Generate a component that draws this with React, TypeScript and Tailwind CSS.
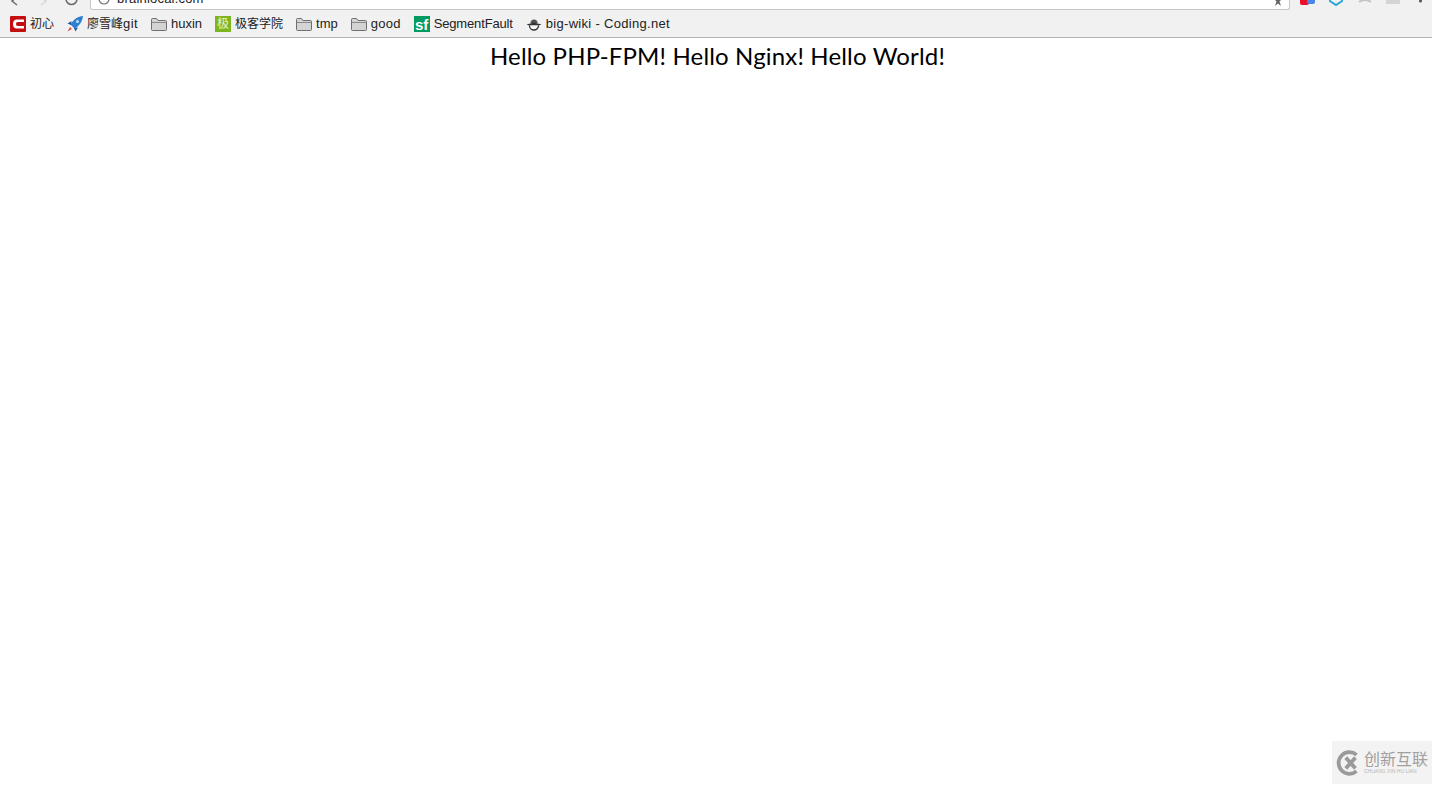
const font = { fontFamily: '"Liberation Sans","Noto Sans CJK SC",sans-serif' };

function Folder() {
  return (
    <svg width="16" height="13" viewBox="0 0 16 13" className="shrink-0">
      <path d="M0.500 11.500V1.500Q0.500 0.500 1.500 0.500H5.500L7 2.500H14.500Q15.500 2.500 15.500 3.500V11.500Q15.500 12.500 14.500 12.500H1.500Q0.500 12.500 0.500 11.500Z" fill="#d4d4d4" stroke="#6f6f6f" />
      <path d="M1 4.500H15" stroke="#8a8a8a" />
    </svg>
  );
}

function Bookmark({ icon, label, className }: { icon: React.ReactNode; label: React.ReactNode; className?: string }) {
  return (
    <div className={`flex items-center gap-1 ${className ?? ""}`}>
      {icon}
      <span className="text-[13px] leading-4 text-[#222] whitespace-nowrap">{label}</span>
    </div>
  );
}

export default function App() {
  return (
    <div className="relative h-[785px] w-[1432px] overflow-hidden bg-white" style={font}>
      <div className="h-[38px] border-b border-[#b4b4b4] bg-[#f1f1f1] flex flex-col">
        <div className="h-[10px] flex items-end relative overflow-hidden">
          <svg width="90" height="10" viewBox="0 0 90 10" className="shrink-0">
            <path d="M17 -3L12 1L17 5" fill="none" stroke="#6e6e6e" strokeWidth="1.600" />
            <path d="M41 -3L46 1L41 5" fill="none" stroke="#d8d8d8" strokeWidth="1.600" />
            <path d="M77 -1A5.500 5.500 0 1 1 66 -1" fill="none" stroke="#6e6e6e" strokeWidth="1.600" />
          </svg>
          <div className="w-[1200px] h-[10px] shrink-0 bg-white border-b border-r border-l border-[#c6c6c6] rounded-b-[3px] relative overflow-hidden">
            <svg width="14" height="10" viewBox="0 0 14 10" className="absolute left-[6px] top-0">
              <circle cx="7" cy="-1" r="5" fill="none" stroke="#777" strokeWidth="1.200" />
            </svg>
            <span className="absolute left-[26px] top-[-9px] text-[13px] leading-4 text-[#222] tracking-[0.2px]">brainlocal.com</span>
            <svg width="14" height="10" viewBox="0 0 14 10" className="absolute right-[4px] top-0">
              <path d="M2 -2L12 -2L8.500 1.500L10 6L7 3.500L4 6L5.500 1.500Z" fill="#666" />
            </svg>
          </div>
          <svg width="142" height="10" viewBox="0 0 142 10" className="shrink-0">
            <rect x="10" y="-4" width="9" height="9" rx="2" fill="#e8102a" />
            <rect x="17" y="-4" width="8" height="8" rx="2" fill="#4a86e8" />
            <path d="M40 -3V1L46 5L52 1V-3" fill="none" stroke="#2aa5d8" strokeWidth="2" />
            <path d="M69 2Q75 -2 81 2" fill="none" stroke="#c4c4c4" strokeWidth="2" />
            <rect x="96" y="-4" width="14" height="8" fill="#d4d4d4" />
            <circle cx="130.500" cy="1" r="1.500" fill="#555" />
          </svg>
        </div>
        <div className="flex-1 flex items-center pt-[1px] gap-[13px] pl-[10px]">
          <Bookmark
            label={<span className="text-[12px]">初心</span>}
            icon={
              <svg width="16" height="16" viewBox="0 0 16 16" className="shrink-0">
                <rect width="16" height="16" rx="1" fill="#c40f12" />
                <path d="M14 3.500H7Q3 3.500 3 8Q3 12.500 7 12.500H14V10H7.500Q6 10 6 8Q6 6 7.500 6H14Z" fill="#fff" />
              </svg>
            }
          />
          <Bookmark
            label={<><span className="text-[12px]">廖雪峰</span><span className="tracking-[0.4px]">git</span></>}
            icon={
              <svg width="16" height="16" viewBox="0 0 16 16" className="shrink-0">
                <path d="M16 0C11 0.500 6 3.500 3.500 8.500L7.500 12.500C12.500 10 15.500 5 16 0Z" fill="#2f7fd0" />
                <circle cx="10.500" cy="5.500" r="1.500" fill="#bfe0f7" />
                <path d="M4.500 5L0.500 7.500L4 9ZM11 11.500L8.500 15.500L7 12Z" fill="#1b5aa0" />
                <path d="M3 11L5 13L0.500 15.500Z" fill="#d9534f" />
              </svg>
            }
          />
          <Bookmark label="huxin" icon={<Folder />} />
          <Bookmark
            label={<span className="text-[12px]">极客学院</span>}
            icon={
              <div className="w-4 h-4 bg-[#7cb51f] flex items-center justify-center">
                <span className="text-[#e8f3d0] text-[12px] leading-none">极</span>
              </div>
            }
          />
          <Bookmark label="tmp" icon={<Folder />} />
          <Bookmark label={<span className="tracking-[0.25px]">good</span>} icon={<Folder />} />
          <Bookmark
            label={<span className="tracking-[-0.15px]">SegmentFault</span>}
            icon={
              <div className="w-4 h-4 bg-[#009a61] flex items-end justify-center">
                <span className="text-white font-bold text-[15px] leading-[15px]">sf</span>
              </div>
            }
          />
          <Bookmark
            label={<span className="tracking-[0.3px]">big-wiki - Coding.net</span>}
            icon={
              <svg width="16" height="16" viewBox="0 0 16 16" className="shrink-0">
                <path d="M4.500 7A3.500 3.500 0 0 1 11.500 7Z" fill="#555" />
                <path d="M0.500 8.500L8 6.500L15.500 8.500L13 9.500H3Z" fill="#333" />
                <path d="M3.500 9.500A4.500 4.500 0 0 0 12.500 9.500" fill="#f8f8f8" stroke="#333" strokeWidth="1.300" />
              </svg>
            }
          />
        </div>
      </div>
      <h1 className="text-center text-[24px] leading-[36px] text-black tracking-[0.16px] pl-[3px]" style={{ fontFamily: '"Lato",sans-serif' }}>
        Hello PHP-FPM! Hello Nginx! Hello World!
      </h1>
      <div className="absolute right-0 bottom-[1px] w-[100px] h-[43px] bg-[#f3f3f3] flex items-center pl-[3px] gap-[1px]">
        <svg width="28" height="28" viewBox="0 0 26 26" className="shrink-0">
          <path d="M20 5.500A10 10 0 1 0 20 20.500" fill="none" stroke="#9a9a9a" strokeWidth="3.500" />
          <path d="M10 8L19 18M19 8L10 18" stroke="#9a9a9a" strokeWidth="3.500" />
        </svg>
        <div className="flex flex-col items-start">
          <span className="text-[16px] leading-[17px] font-normal text-[#a0a0a0] whitespace-nowrap">创新互联</span>
          <span className="text-[5px] leading-[6px] text-[#b5b5b5] whitespace-nowrap">CHUANG XIN HU LIAN</span>
        </div>
      </div>
    </div>
  );
}
